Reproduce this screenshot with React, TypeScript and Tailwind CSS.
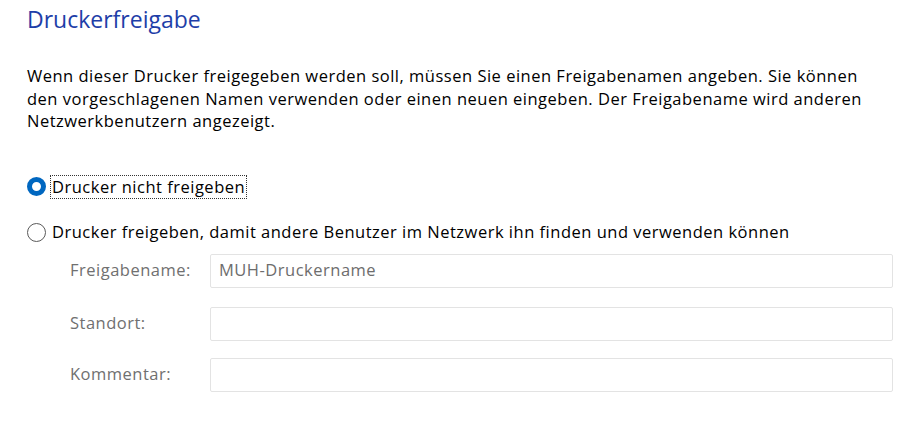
import React from 'react';

const Field: React.FC<{ label: string; value?: string }> = ({ label, value }) => (
    <div className="flex items-center h-[34px]">
        <span className="w-[140px] text-[#707070]">{label}</span>
        <div className="flex-1 h-full border border-[#e3e3e3] rounded-[2px] bg-white flex items-center px-2 text-[#6d6d6d]">
            {value}
        </div>
    </div>
);

export default function App() {
    return (
        <div
            className="w-[903px] h-[423px] bg-white pl-[27px] pr-[10px] pt-[4px] text-[#000] text-[16.5px] tracking-[0.5px] leading-[22.5px]"
            style={{ fontFamily: '"Open Sans", "Noto Sans", sans-serif' }}
        >
            <h1 className="text-[23px] tracking-[0px] leading-[30px] text-[#1e3ea8]">Druckerfreigabe</h1>

            <p className="mt-[31px] whitespace-nowrap">
                Wenn dieser Drucker freigegeben werden soll, müssen Sie einen Freigabenamen angeben. Sie können
                <br />
                den vorgeschlagenen Namen verwenden oder einen neuen eingeben. Der Freigabename wird anderen
                <br />
                Netzwerkbenutzern angezeigt.
            </p>

            <div className="mt-[42px] flex items-center gap-[4px] h-[24px]">
                <span className="w-[19px] h-[19px] rounded-full border-[5px] border-[#0067c0] bg-white" />
                <span className="border border-dotted border-[#333] px-[1px] leading-[22px]">Drucker nicht freigeben</span>
            </div>

            <div className="mt-[22px] flex items-center gap-[6px] h-[24px]">
                <span className="w-[19px] h-[19px] rounded-full border border-[#5a5a5a] bg-white" />
                <span>Drucker freigeben, damit andere Benutzer im Netzwerk ihn finden und verwenden können</span>
            </div>

            <div className="ml-[43px] mt-[9px] flex flex-col">
                <Field label="Freigabename:" value="MUH-Druckername" />
                <div className="h-[19px]" />
                <Field label="Standort:" />
                <div className="h-[17px]" />
                <Field label="Kommentar:" />
            </div>
        </div>
    );
}
